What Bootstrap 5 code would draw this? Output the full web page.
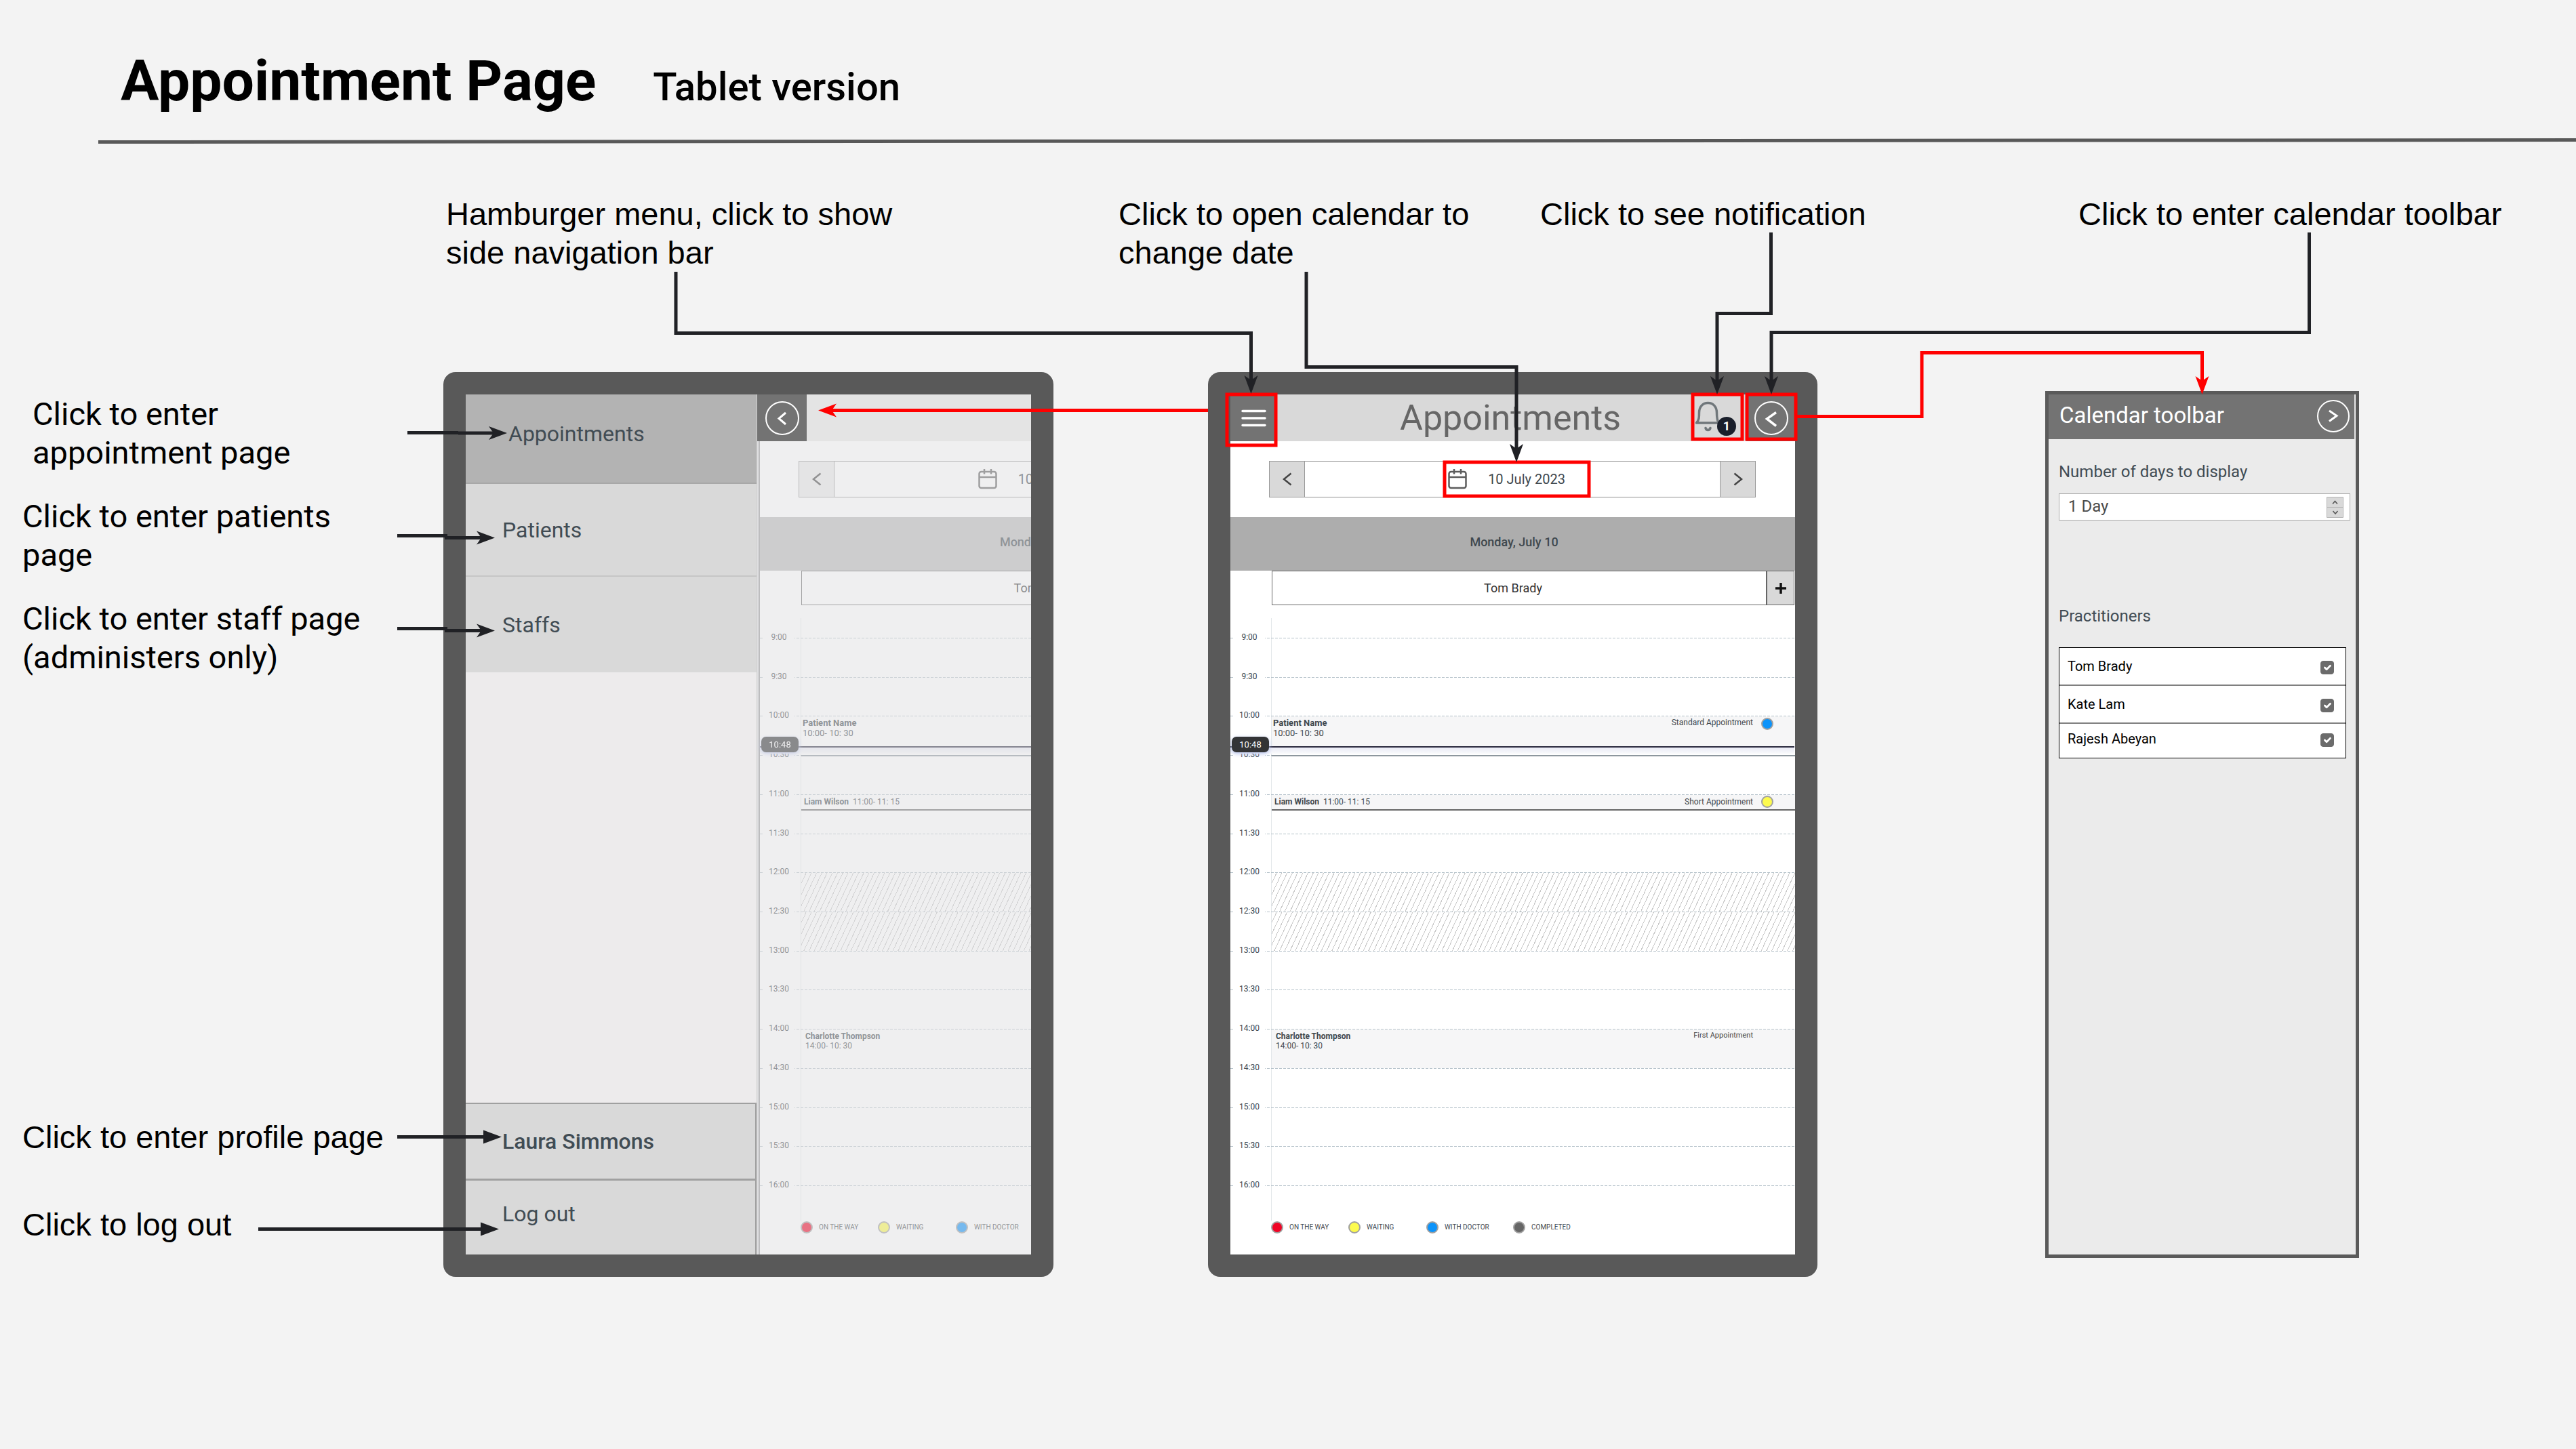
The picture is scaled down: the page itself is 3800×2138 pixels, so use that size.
<!DOCTYPE html>
<html lang="en">
<head>
<meta charset="utf-8">
<meta name="viewport" content="width=device-width, initial-scale=1">
<title>Appointment Page - Tablet version</title>
<link href="https://cdn.jsdelivr.net/npm/bootstrap@5.3.0/dist/css/bootstrap.min.css" rel="stylesheet">
<style>
  body { background: #f3f3f3; color: #000; font-family: Roboto, sans-serif; }
  a { text-decoration: none; color: inherit; }
  .sheet-page { min-height: 100vh; overflow: hidden; }

  /* page heading */
  .page-head { padding: 70px 0 0 178px; gap: 84px; height: 169px; }
  .page-head h1 { font-size: 84px; line-height: 100px; font-weight: 700; }
  .page-head h2 { font-size: 58px; line-height: 67px; font-weight: 500; }
  .rule { display: block; margin-top: 35px; width: 100%; height: 8px; }

  /* notes around the screens */
  .note { font-size: 47px; line-height: 57px; margin: 0; white-space: nowrap; }
  .note-arial { font-family: "Liberation Sans", sans-serif; }
  .notes-top { display: grid; grid-template-columns: 654fr 996fr 622fr 794fr 734fr; margin-top: 75px; height: 114px; }
  .notes-top .note:first-child { grid-column: 2; }
  .notes-side { padding: 33px 0 0 33px; }
  .notes-side .note + .note { margin-top: 37px; }
  .notes-side .note.first-note { padding-left: 15px; }
  .notes-side .note.bottom-note { margin-top: 651px; }
  .notes-side .note.last-note { margin-top: 72px; }
  .board { display: grid; grid-template-columns: 654fr 900fr 228fr 899fr 336fr 463fr 320fr; margin-top: 148px; align-items: start; }
  .board > * { min-width: 0; }
  .board .col-menu { grid-column: 2; }
  .board .col-main { grid-column: 4; }
  .board .col-tools { grid-column: 6; margin-top: 28px; }

  /* tablet shell */
  .tablet { border: 33px solid #595959; border-radius: 18px; background: #595959; }
  .screen { overflow: hidden; height: 1269px; background: #fff; }
  .bar { height: 69px; background: #d9d9d9; }
  .dark-btn { border: 0; border-radius: 0; padding: 0; background: #737373; display: flex; align-items: center; justify-content: center; color: #fff; height: 69px; }
  .bar-title { font-size: 52px; line-height: 69px; font-weight: 400; color: #666; padding-left: 76px; }
  .bell { width: 80px; border: 0; padding: 0; background: #d9d9d9; position: relative; display: flex; align-items: flex-start; }
  .bell svg { display: block; margin: 10px 0 0 4px; }
  .bell-count { position: absolute; left: 37px; top: 33px; width: 28px; height: 28px; border-radius: 50%; background: #1a1f2b; color: #fff; font-size: 18px; line-height: 28px; font-weight: 700; text-align: center; }

  /* side navigation */
  .side-nav { width: 430px; background: #edebec; color: #414c54; font-size: 32px; flex: none; border-right: 1px solid #d0d0d0; }
  .side-nav a { display: flex; align-items: center; padding-left: 54px; background: #d9d9d9; }
  .side-nav a.on { height: 132px; background: #b3b3b3; padding: 0 0 14px 63px; border-bottom: 2px solid #a8a8a8; }
  .side-nav a.mid { height: 137px; border-bottom: 2px solid #c6c6c6; }
  .side-nav a.end { height: 141px; }
  .side-nav a.who { height: 113px; border: solid #a0a0a0; border-width: 2px 2px 1px 0; font-weight: 500; }
  .side-nav a.out { height: 111px; padding-bottom: 12px; border: solid #a0a0a0; border-width: 2px 2px 0 0; }
  .pane { background: #dfdfe1; overflow: hidden; min-width: 0; }
  .pane .bar { background: #e4e4e4; }
  .pane .dark-btn { width: 73px; }

  /* calendar */
  .calendar { background: #fff; color: #3f484e; }
  .date-row { padding: 29px 58px 29px 57px; }
  .date-row .step { width: 53px; height: 54px; border: 1px solid #999; border-radius: 0; background: #d9d9d9; padding: 0; display: flex; align-items: center; justify-content: center; }
  .date-row .pick { height: 54px; border: solid #909090; border-width: 1px 0; background: #fff; border-radius: 0; display: flex; align-items: center; justify-content: center; gap: 31px; font-size: 20px; color: #3f484e; padding: 0 17px 0 0; }
  .day-band { height: 79px; background: #adadad; font-size: 18px; font-weight: 500; display: flex; align-items: center; justify-content: center; padding: 0 0 6px 4px; }
  .who-row { height: 51px; padding: 0 1px 0 61px; }
  .who-row .name { border: 1px solid #666; font-size: 18px; color: #333; display: flex; align-items: center; justify-content: center; padding-right: 18px; }
  .who-row button { width: 41px; border: solid #666; border-width: 1px; background: #d9d9d9; padding: 0; }
  .who-row button svg { display: block; margin: auto; }
  .lead-in { height: 48px; padding: 19px 0 0 60px; }
  .lead-in div { height: 29px; border-left: 1px solid #e2e7ea; }
  .hours { display: grid; grid-template-rows: repeat(14, 1fr) 52px; height: 860px; position: relative; }
  .hour { display: flex; min-height: 0; padding-top: 1px; background: repeating-linear-gradient(90deg, #b4c1c9 0 4px, #fff 4px 6px) top / 100% 1px no-repeat; }
  .hour time.at { font-size: 12px; line-height: 18px; height: 18px; width: 46px; margin: -11px 9px 0 5px; text-align: center; background: #fff; flex: none; }
  .slot { flex: 1; border-left: 1px solid #e2e7ea; min-width: 0; }
  .visit { background: #f6f6f7; display: flex; justify-content: space-between; font-size: 12px; line-height: 14px; }
  .visit b { font-weight: 700; }
  .visit .kind { display: flex; gap: 12px; padding-right: 32px; }
  .visit-a { height: 44px; padding: 2px 0 0 2px; font-size: 13px; line-height: 15px; }
  .visit-a .kind { font-size: 12px; }
  .visit-b { height: 23px; padding-left: 4px; align-items: center; border-bottom: 2px solid #666; }
  .visit-b .kind { align-items: center; }
  .visit-c { height: 100%; padding: 3px 0 0 6px; }
  .visit-c .kind { font-size: 11px; line-height: 12px; padding-right: 62px; }
  .slot.after { margin-top: -1px; border-top: 2px solid #8d979e; }
  .slot.closed { background: repeating-linear-gradient(115deg, #fff 0 6px, #c9c9c9 6px 7px); }
  .dot { width: 18px; height: 18px; border-radius: 50%; border: 2px solid #a0a0a0; display: inline-block; flex: none; }
  .blue { background: #0c93fa; } .yellow { background: #fdfb4e; } .red { background: #f00425; } .grey { background: #666; }
  .now { position: absolute; left: 0; right: 0; top: 146px; height: 23px; }
  .now::before { content: ""; position: absolute; left: 0; right: 1px; top: 14px; height: 11px; border-top: 2px solid #2c2c40; background: linear-gradient(#e9eaf5, #f9fafc); }
  .now time { position: relative; display: block; margin-left: 2px; width: 55px; height: 23px; border-radius: 7px; background: #333436; color: #fff; font-size: 13px; line-height: 23px; text-align: center; box-shadow: 0 2px 6px #b8c4ee; }
  .legend { display: grid; grid-template-columns: 114px 115px 128px auto; height: 50px; padding-left: 60px; margin: 0; list-style: none; font-size: 10px; line-height: 20px; align-items: start; }
  .legend li { display: flex; align-items: center; gap: 9px; }

  /* calendar behind the open side navigation */
  .dimmed { margin-left: 2px; border-left: 2px solid #bdbdbf; }
  .dimmed .calendar { opacity: .5; width: 834px; }
  .dimmed .day-band { background: #bbb; }
  .dimmed .step { background: #e9e9e9; }
  .dimmed .visit { background: none; }

  /* calendar toolbar */
  .tools { border: 5px solid #5a5a5a; background: #ebebeb; height: 1279px; color: #414c54; }
  .tools-head { height: 66px; background: #737373; color: #fff; border-right: 2px solid #e8e8e8; padding: 0 6px 0 16px; display: flex; justify-content: space-between; align-items: center; font-size: 33px; line-height: 40px; }
  .tools-head span { padding-bottom: 4px; }
  .tools-head button { border: 0; padding: 0; background: none; }
  .tools-head svg, .dark-btn svg { display: block; }
  .tools-body { padding: 30px 8px 0 15px; font-size: 24px; line-height: 30px; }
  .tools-body label.cap { display: block; padding-top: 3px; }
  .stepper { margin-top: 17px; height: 40px; border: 1px solid #aaa; background: #fff; display: flex; align-items: center; padding-right: 9px; }
  .stepper select { appearance: none; border: 0; background: none; flex: 1; padding: 0 0 3px 13px; font-size: 24px; line-height: 30px; color: #4c4c4c; }
  .stepper svg { display: block; }
  .tools fieldset { margin-top: 126px; }
  fieldset legend.cap { font-size: 24px; line-height: 30px; margin: 0; padding: 0; float: none; }
  .people { margin: 31px 6px 0 0; border: 1px solid #000; background: #fff; color: #000; font-size: 20px; }
  .people label { display: flex; justify-content: space-between; align-items: center; height: 56px; padding: 0 17px 0 12px; border-bottom: 2px solid #808080; }
  .people label:last-child { height: 50px; padding-bottom: 6px; border: 0; }
  .people .form-check-input { width: 20px; height: 20px; margin: 4px 0 0; border-radius: 4px; background-color: #6b6b6b; border-color: #6b6b6b; }

  .connectors { position: absolute; left: 0; top: 0; width: 100%; pointer-events: none; }
</style>
</head>
<body>
<div class="sheet-page position-relative">

  <header>
    <div class="page-head d-flex align-items-baseline">
      <h1 class="m-0">Appointment Page</h1>
      <h2 class="m-0">Tablet version</h2>
    </div>
    <svg class="rule" viewBox="0 0 3800 8" preserveAspectRatio="none"><path d="M145 5.5L3800 2.5" stroke="#585858" stroke-width="5"/></svg>
  </header>

  <section class="notes-top">
    <p class="note note-arial ps-1">Hamburger menu, click to show<br>side navigation bar</p>
    <p class="note note-arial">Click to open calendar to<br>change date</p>
    <p class="note note-arial">Click to see notification</p>
    <p class="note note-arial">Click to enter calendar toolbar</p>
  </section>

  <main class="board">
    <aside class="notes-side">
      <p class="note first-note">Click to enter<br>appointment page</p>
      <p class="note">Click to enter patients<br>page</p>
      <p class="note">Click to enter staff page<br>(administers only)</p>
      <p class="note note-arial bottom-note">Click to enter profile page</p>
      <p class="note note-arial last-note">Click to log out</p>
    </aside>

    <section class="tablet col-menu">
      <div class="screen d-flex">
        <nav class="side-nav d-flex flex-column">
          <a class="on" href="#">Appointments</a>
          <a class="mid" href="#">Patients</a>
          <a class="end" href="#">Staffs</a>
          <a class="who mt-auto" href="#">Laura Simmons</a>
          <a class="out" href="#">Log out</a>
        </nav>
        <div class="pane flex-fill">
          <div class="bar">
            <button class="dark-btn" type="button" aria-label="Close menu">
              <svg width="52" height="52" viewBox="0 0 52 52" fill="none" stroke="#fff"><circle cx="26" cy="26" r="24" stroke-width="2"/><path d="M31 18L21 26.500L31 35" stroke-width="3"/></svg>
            </button>
          </div>
          <div class="dimmed" data-calendar></div>
        </div>
      </div>
    </section>

    <section class="tablet col-main">
      <div class="screen">
        <div class="bar d-flex">
          <button class="dark-btn" type="button" aria-label="Menu" style="width:69px">
            <svg width="38" height="28" viewBox="0 0 38 28" stroke="#fff" stroke-width="3.500" stroke-linecap="round"><path d="M2 3.500H35M2 14H35M2 24.500H35"/></svg>
          </button>
          <div class="bar-title flex-fill text-center">Appointments</div>
          <button class="bell" type="button" aria-label="Notifications">
            <svg width="42" height="46" viewBox="0 0 42 46" fill="none" stroke="#70777b" stroke-width="3.500"><path d="M2.500 32H35.500C32.500 28 32.500 23 32.500 17C32.500 8 27 2.500 19.500 2.500S6.500 8 6.500 17C6.500 23 6.500 28 2.500 32Z" stroke-linejoin="round"/><path d="M16 39.500C17 43.500 22 43.500 23 39.500" stroke-linecap="round"/></svg>
            <span class="bell-count">1</span>
          </button>
          <button class="dark-btn" type="button" aria-label="Open calendar toolbar" style="width:72px">
            <svg width="52" height="52" viewBox="0 0 52 52" fill="none" stroke="#fff"><circle cx="27" cy="26" r="24" stroke-width="2"/><path d="M34 17.500L20.500 27L34 37.500" stroke-width="3.500"/></svg>
          </button>
        </div>
        <div data-calendar></div>
      </div>
    </section>

    <section class="tools col-tools">
      <div class="tools-head">
        <span>Calendar toolbar</span>
        <button type="button" aria-label="Close toolbar">
          <svg width="50" height="50" viewBox="0 0 50 50" fill="none" stroke="#fff"><circle cx="25" cy="24" r="23" stroke-width="2"/><path d="M19 16L30 23.500L19 31.500" stroke-width="3"/></svg>
        </button>
      </div>
      <div class="tools-body">
        <label class="cap" for="days">Number of days to display</label>
        <div class="stepper">
          <select id="days"><option>1 Day</option></select>
          <svg width="25" height="31" viewBox="0 0 25 31" fill="#d9d9d9" stroke="#b4b4b4"><path d="M.5 .5H24.500V30.500H.5ZM.5 15.500H24.500"/><path d="M9 10.500L12.500 6.500L16 10.500M9.500 21L13 25L16.500 21" fill="none" stroke="#555" stroke-width="1.500"/></svg>
        </div>
        <fieldset>
          <legend class="cap">Practitioners</legend>
          <div class="people">
            <label>Tom Brady <input class="form-check-input" type="checkbox" checked></label>
            <label>Kate Lam <input class="form-check-input" type="checkbox" checked></label>
            <label>Rajesh Abeyan <input class="form-check-input" type="checkbox" checked></label>
          </div>
        </fieldset>
      </div>
    </section>
  </main>

  <svg class="connectors" viewBox="0 0 3800 2138" fill="none" stroke-width="5">
    <defs>
      <marker id="barb" markerUnits="userSpaceOnUse" markerWidth="30" markerHeight="24" refX="20" refY="12" orient="auto"><path d="M1 2L28 12L1 22L8 12Z" fill="#202125"/></marker>
      <marker id="barbRed" markerUnits="userSpaceOnUse" markerWidth="30" markerHeight="24" refX="20" refY="12" orient="auto"><path d="M1 2L28 12L1 22L8 12Z" fill="#f00"/></marker>
      <marker id="wedge" markerUnits="userSpaceOnUse" markerWidth="30" markerHeight="24" refX="20" refY="12" orient="auto"><path d="M1 2L28 12L1 22Z" fill="#202125"/></marker>
    </defs>
    <g stroke="#f00">
      <rect x="1810" y="582" width="72" height="75"/>
      <rect x="2497" y="582" width="73" height="66"/>
      <rect x="2577" y="582" width="72" height="66"/>
      <rect x="2131" y="682" width="213" height="50"/>
      <path d="M1782 605.500H1215" marker-end="url(#barbRed)"/>
      <path d="M2651 614.500H2835V520.500H3248.500V574" marker-end="url(#barbRed)"/>
    </g>
    <g stroke="#202125">
      <path d="M997 401V491.500H1845.500V573" marker-end="url(#barb)"/>
      <path d="M1927 401V541.500H2237V674" marker-end="url(#barb)"/>
      <path d="M2612.500 343V462.500H2533V574" marker-end="url(#barb)"/>
      <path d="M3406.500 343V490.500H2613V574" marker-end="url(#barb)"/>
      <path d="M601 638.500H676"/><path d="M676 639H740" marker-end="url(#barb)"/>
      <path d="M586 790.500H660"/><path d="M656 793.500H722" marker-end="url(#barb)"/>
      <path d="M586 927.500H660"/><path d="M656 930.500H722" marker-end="url(#barb)"/>
      <path d="M586 1677.500H732" marker-end="url(#wedge)"/>
      <path d="M381 1813.500H728" marker-end="url(#wedge)"/>
    </g>
  </svg>
</div>

<template id="calendarView">
  <div class="calendar">
    <div class="date-row d-flex">
      <button class="step" type="button" aria-label="Previous day"><svg width="16" height="20" viewBox="0 0 16 20" fill="none" stroke="#444" stroke-width="2.500"><path d="M13.500 1.500L3 10L13.500 18.500"/></svg></button>
      <button class="pick flex-fill" type="button">
        <svg width="28" height="30" viewBox="0 0 28 30" fill="none" stroke="#5c5c5c" stroke-width="2.500"><rect x="1.500" y="4" width="25" height="24" rx="3"/><path d="M1.500 12H26.500M9 0V7.500M19 0V7.500"/></svg>
        <span>10 July 2023</span>
      </button>
      <button class="step" type="button" aria-label="Next day"><svg width="16" height="20" viewBox="0 0 16 20" fill="none" stroke="#444" stroke-width="2.500"><path d="M2.500 1.500L13 10L2.500 18.500"/></svg></button>
    </div>
    <div class="day-band">Monday, July 10</div>
    <div class="who-row d-flex">
      <div class="name flex-fill">Tom Brady</div>
      <button type="button" aria-label="Add"><svg width="18" height="18" viewBox="0 0 18 18" stroke="#111" stroke-width="3.500"><path d="M9 1V17M1 9H17"/></svg></button>
    </div>
    <div class="lead-in"><div></div></div>
    <div class="hours">
      <div class="hour"><time class="at">9:00</time><div class="slot"></div></div>
      <div class="hour"><time class="at">9:30</time><div class="slot"></div></div>
      <div class="hour"><time class="at">10:00</time><div class="slot">
        <div class="visit visit-a"><div><b>Patient Name</b><br>10:00- 10: 30</div><div class="kind">Standard Appointment <i class="dot blue"></i></div></div></div></div>
      <div class="hour"><time class="at">10:30</time><div class="slot after"></div></div>
      <div class="hour"><time class="at">11:00</time><div class="slot">
        <div class="visit visit-b"><div><b>Liam Wilson</b>&nbsp; 11:00- 11: 15</div><div class="kind">Short Appointment <i class="dot yellow"></i></div></div></div></div>
      <div class="hour"><time class="at">11:30</time><div class="slot"></div></div>
      <div class="hour"><time class="at">12:00</time><div class="slot closed"></div></div>
      <div class="hour"><time class="at">12:30</time><div class="slot closed"></div></div>
      <div class="hour"><time class="at">13:00</time><div class="slot"></div></div>
      <div class="hour"><time class="at">13:30</time><div class="slot"></div></div>
      <div class="hour"><time class="at">14:00</time><div class="slot">
        <div class="visit visit-c"><div><b>Charlotte Thompson</b><br>14:00- 10: 30</div><div class="kind">First Appointment</div></div></div></div>
      <div class="hour"><time class="at">14:30</time><div class="slot"></div></div>
      <div class="hour"><time class="at">15:00</time><div class="slot"></div></div>
      <div class="hour"><time class="at">15:30</time><div class="slot"></div></div>
      <div class="hour"><time class="at">16:00</time><div class="slot"></div></div>
      <div class="now"><time>10:48</time></div>
    </div>
    <ul class="legend">
      <li><i class="dot red"></i>ON THE WAY</li>
      <li><i class="dot yellow"></i>WAITING</li>
      <li><i class="dot blue"></i>WITH DOCTOR</li>
      <li><i class="dot grey"></i>COMPLETED</li>
    </ul>
  </div>
</template>

<script src="https://cdn.jsdelivr.net/npm/bootstrap@5.3.0/dist/js/bootstrap.bundle.min.js"></script>
<script>
  // Both tablets show the same calendar.
  const view = document.getElementById('calendarView');
  document.querySelectorAll('[data-calendar]').forEach(el => el.append(view.content.cloneNode(true)));
</script>
</body>
</html>
